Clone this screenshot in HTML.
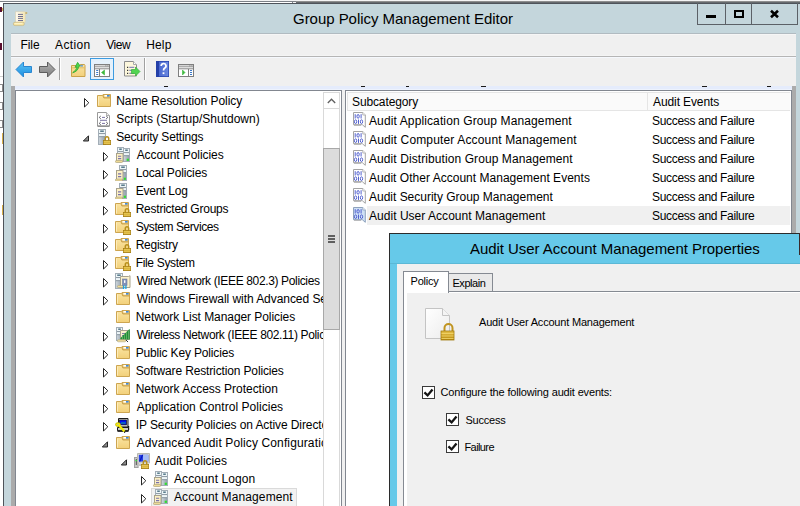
<!DOCTYPE html>
<html><head><meta charset="utf-8"><style>
html,body{margin:0;padding:0;}
body{width:800px;height:506px;overflow:hidden;position:relative;background:#fff;font-family:"Liberation Sans", sans-serif;}
.r{position:absolute;}
.t{position:absolute;white-space:nowrap;}
.clip{position:absolute;overflow:hidden;}
svg.r{overflow:visible;}
</style></head><body>
<svg width="0" height="0" style="position:absolute"><defs><linearGradient id="gFold" x1="0" y1="0" x2="0" y2="1"><stop offset="0" stop-color="#fae3a0"/><stop offset="1" stop-color="#f2d07a"/></linearGradient><linearGradient id="gSrv" x1="0" y1="0" x2="1" y2="0"><stop offset="0" stop-color="#d0d8de"/><stop offset="1" stop-color="#8f9ca8"/></linearGradient><linearGradient id="gLock" x1="0" y1="0" x2="0" y2="1"><stop offset="0" stop-color="#e8c24a"/><stop offset="1" stop-color="#b8890e"/></linearGradient><symbol id="folder" viewBox="0 0 16 16"><path d="M7 1.5 H14.5 V5 H8 Z" fill="#f0d07c" stroke="#cda550"/><rect x="8.5" y="2" width="2.5" height="1.6" fill="#ffffff"/><rect x="11" y="2" width="2.6" height="1.6" fill="#3d8ae2"/><path d="M1.5 2.5 H6.8 L7.8 5 H14.5 V13.5 H1.5 Z" fill="url(#gFold)" stroke="#cda550"/><path d="M2.5 3.5 V12.5" stroke="#fff0c4" stroke-width="0.8"/></symbol><symbol id="folderlock" viewBox="0 0 16 16"><path d="M6 1.5 H13.5 V5 H7 Z" fill="#f0d07c" stroke="#cda550"/><rect x="7.5" y="2" width="2.5" height="1.6" fill="#ffffff"/><rect x="10" y="2" width="2.6" height="1.6" fill="#3d8ae2"/><path d="M0.5 2.5 H5.8 L6.8 5 H13.5 V13.5 H0.5 Z" fill="url(#gFold)" stroke="#cda550"/><path d="M1.5 3.5 V12.5" stroke="#fff0c4" stroke-width="0.8"/><path d="M10.3 11.5 V9.6 a1.7 1.9 0 0 1 3.4 0 V11.5" fill="none" stroke="#b8901c" stroke-width="1.5"/><rect x="8.35" y="11.35" width="7.3" height="4.3" fill="url(#gLock)" stroke="#a27a0c" stroke-width="0.7"/><path d="M8.8 12.9 h6.4 M8.8 14.4 h6.4" stroke="#f6dc6e" stroke-width="0.7"/></symbol><symbol id="scripts" viewBox="0 0 16 16"><path d="M1.5 1.5 h9 l3 3 v10.5 h-12 z" fill="#fff" stroke="#9a9a9a"/><path d="M10.5 1.5 v3 h3" fill="#eee" stroke="#b0b0b0"/><path d="M1.5 15.2 h12" stroke="#777"/><path d="M4.8 5 L3.2 6.4 L4.8 7.8 M10.2 5 L11.8 6.4 L10.2 7.8 M4.8 11 L3.2 12.4 L4.8 13.8 M10.2 11 L11.8 12.4 L10.2 13.8" fill="none" stroke="#55555e" stroke-width="0.9"/><path d="M6 6.4 h3 M4 9.3 h7 M6 12.4 h3" stroke="#7b74a4" stroke-width="1"/></symbol><symbol id="srvlock" viewBox="0 0 16 16"><rect x="2.5" y="0.5" width="7" height="15" fill="url(#gSrv)" stroke="#a3aeb7"/><rect x="3" y="1" width="6" height="3.2" fill="#eef6f8"/><rect x="4.2" y="1.6" width="3.5999999999999996" height="1.1" fill="#1d4a60"/><path d="M3 4.6 h6" stroke="#8c98a2"/><rect x="3" y="5.1" width="6" height="2.2" fill="#eef6f8"/><path d="M3 7.7 h6" stroke="#8c98a2"/><path d="M9.3 11.5 V9.6 a1.7 1.9 0 0 1 3.4 0 V11.5" fill="none" stroke="#b8901c" stroke-width="1.5"/><rect x="7.35" y="11.35" width="7.3" height="4.3" fill="url(#gLock)" stroke="#a27a0c" stroke-width="0.7"/><path d="M7.8 12.9 h6.4 M7.8 14.4 h6.4" stroke="#f6dc6e" stroke-width="0.7"/></symbol><symbol id="srv2" viewBox="0 0 16 16"><rect x="2.5" y="0.5" width="6" height="12" fill="url(#gSrv)" stroke="#a3aeb7"/><rect x="3" y="1" width="5" height="3.2" fill="#eef6f8"/><rect x="4.2" y="1.6" width="2.5999999999999996" height="1.1" fill="#1d4a60"/><path d="M3 4.6 h5" stroke="#8c98a2"/><rect x="3" y="5.1" width="5" height="2.2" fill="#eef6f8"/><path d="M3 7.7 h5" stroke="#8c98a2"/><rect x="8.5" y="1.5" width="6" height="13" fill="url(#gSrv)" stroke="#a3aeb7"/><rect x="9" y="2" width="5" height="3.2" fill="#eef6f8"/><rect x="10.2" y="2.6" width="2.5999999999999996" height="1.1" fill="#1d4a60"/><path d="M9 5.6 h5" stroke="#8c98a2"/><rect x="9" y="6.1" width="5" height="2.2" fill="#eef6f8"/><path d="M9 8.7 h5" stroke="#8c98a2"/><rect x="11.7" y="11.7" width="2.2" height="2.2" fill="#2ee02e"/><rect x="1.5" y="6.5" width="6.5" height="7.8" fill="#fcf0c4" stroke="#a8a28c"/><path d="M3 9.308 h3.2 M3 11.648 h3.2" stroke="#7a72ac" stroke-width="1.1"/><rect x="0.4" y="13.600000000000001" width="7.2" height="1.9" rx="0.9" fill="#f4de98" stroke="#aaa27c" stroke-width="0.7"/></symbol><symbol id="srv1" viewBox="0 0 16 16"><rect x="4.5" y="0.5" width="7" height="15" fill="url(#gSrv)" stroke="#a3aeb7"/><rect x="5" y="1" width="6" height="3.2" fill="#eef6f8"/><rect x="6.2" y="1.6" width="3.5999999999999996" height="1.1" fill="#1d4a60"/><path d="M5 4.6 h6" stroke="#8c98a2"/><rect x="5" y="5.1" width="6" height="2.2" fill="#eef6f8"/><path d="M5 7.7 h6" stroke="#8c98a2"/><rect x="8.7" y="12.7" width="2.2" height="2.2" fill="#2ee02e"/><rect x="1.5" y="5.5" width="6.5" height="9.3" fill="#fcf0c4" stroke="#a8a28c"/><path d="M3 8.848 h3.2 M3 11.638000000000002 h3.2" stroke="#7a72ac" stroke-width="1.1"/><rect x="0.4" y="14.100000000000001" width="7.2" height="1.9" rx="0.9" fill="#f4de98" stroke="#aaa27c" stroke-width="0.7"/></symbol><symbol id="wired" viewBox="0 0 16 16"><rect x="0.5" y="0.5" width="7" height="15" fill="url(#gSrv)" stroke="#a3aeb7"/><rect x="1" y="1" width="6" height="3.2" fill="#eef6f8"/><rect x="2.2" y="1.6" width="3.5999999999999996" height="1.1" fill="#1d4a60"/><path d="M1 4.6 h6" stroke="#8c98a2"/><rect x="1" y="5.1" width="6" height="2.2" fill="#eef6f8"/><path d="M1 7.7 h6" stroke="#8c98a2"/><path d="M5.5 3.5 h8 l1.5 -0.8 v11.8 h-9.5 z" fill="#fcf2cc" stroke="#a8a28c"/><rect x="2.4" y="12.5" width="6" height="2" rx="1" fill="#f4de98" stroke="#aaa27c" stroke-width="0.6"/><rect x="7.5" y="6" width="4.5" height="6.5" fill="#8291b8" stroke="#6d7aa0" stroke-width="0.6"/><rect x="9" y="7.3" width="1.4" height="2.6" fill="#fff"/><path d="M8.6 12.5 v3.5 M10.9 12.5 v3.5" stroke="#1aa2e2" stroke-width="1.3"/></symbol><symbol id="wireless" viewBox="0 0 16 16"><rect x="1.5" y="0.5" width="6" height="13" fill="url(#gSrv)" stroke="#a3aeb7"/><rect x="2" y="1" width="5" height="3.2" fill="#eef6f8"/><rect x="3.2" y="1.6" width="2.5999999999999996" height="1.1" fill="#1d4a60"/><path d="M2 4.6 h5" stroke="#8c98a2"/><rect x="2" y="5.1" width="5" height="2.2" fill="#eef6f8"/><path d="M2 7.7 h5" stroke="#8c98a2"/><path d="M5.5 3.5 h9 v9 h-9 z" fill="#fcf2cc" stroke="#a8a28c"/><path d="M7 6.5 h3 M7 8.5 h2.5" stroke="#7a72ac" stroke-width="0.9"/><path d="M5.5 12.5 V11 L7 9.5 V12.5 Z M7.3 12.5 V9 L9 7.5 V12.5 Z M9.3 12.5 V7 L11 5.5 V12.5 Z M11.3 12.5 V5 L13 3.5 V12.5 Z M13.3 12.5 V3 L14.8 2 V12.5 Z" fill="#1f8f35"/><rect x="2.3" y="12.8" width="8.5" height="2" rx="1" fill="#f4de98" stroke="#aaa27c" stroke-width="0.6"/><path d="M11 13 L13 15" stroke="#333" stroke-width="1"/></symbol><symbol id="ipsec" viewBox="0 0 16 16"><path d="M3.5 1.5 h9.5 v8.5 h-9.5 z" fill="#cdcdcd" stroke="#1a1a1a"/><rect x="4.5" y="3" width="7" height="4.8" fill="#0010f8" stroke="#000" stroke-width="0.6"/><path d="M6 6 h4.5" stroke="#139a9a" stroke-width="1.2"/><path d="M13.6 9 v4" stroke="#111" stroke-width="1.2"/><path d="M2.5 10.5 h11 v3.2 h-11 z" fill="#c8c8c8" stroke="#1a1a1a"/><path d="M2.5 14.2 h11" stroke="#111" stroke-width="1.2"/><ellipse cx="3" cy="7.6" rx="2.6" ry="2" fill="#f8f000" stroke="#9a9000" stroke-width="0.5"/><ellipse cx="2.9" cy="7.4" rx="0.9" ry="0.5" fill="#a8a8d0"/><path d="M4 8.4 L9.5 14.5" stroke="#f4ec00" stroke-width="2.2"/><path d="M9 15.3 h1.2" stroke="#111"/></symbol><symbol id="auditpol" viewBox="0 0 16 16"><rect x="0.5" y="4.5" width="3.6" height="10" fill="#c8c8c8" stroke="#a0a0a0"/><path d="M2.3 6 v6" stroke="#505050" stroke-width="1"/><rect x="1.3" y="7.1" width="2" height="1.1" fill="#3ee83e"/><path d="M3.5 0.5 h12 v9.5 h-12 z" fill="#dcdcd4" stroke="#b8b8b0"/><rect x="4.8" y="1.8" width="9.5" height="6.8" fill="#2840e8"/><rect x="9" y="1.8" width="5.3" height="6.8" fill="#a6bdf4"/><path d="M5 8.6 L8 1.8 h1.2 L6.4 8.6 z" fill="#0818b8"/><path d="M6 11 v2" stroke="#888"/><path d="M9.3 11.5 V9.6 a1.7 1.9 0 0 1 3.4 0 V11.5" fill="none" stroke="#b8901c" stroke-width="1.5"/><rect x="7.35" y="11.35" width="7.3" height="4.3" fill="url(#gLock)" stroke="#a27a0c" stroke-width="0.7"/><path d="M7.8 12.9 h6.4 M7.8 14.4 h6.4" stroke="#f6dc6e" stroke-width="0.7"/></symbol><symbol id="binary" viewBox="0 0 16 16"><path d="M1.5 0.5 h9.3 l2.5 2.5 v12.3 l-3 -2.6 h-8.8 z" fill="#ffffff" stroke="#a4a4a4"/><path d="M10.8 0.5 v2.5 h2.5" fill="#fff" stroke="#a4a4a4" stroke-width="0.8"/><g fill="none" stroke="#4a5acc" stroke-width="0.95"><path d="M3.2 2.2 v4.3"/><ellipse cx="6.1" cy="4.35" rx="1.15" ry="1.85"/><path d="M9.1 2.2 v4.3"/><ellipse cx="3.6" cy="9.7" rx="1.15" ry="1.85"/><path d="M6.5 7.6 v4.3"/><ellipse cx="9.5" cy="9.7" rx="1.15" ry="1.85"/></g><path d="M2 13.3 h7" stroke="#a8a8a8" stroke-width="0.9"/></symbol><symbol id="binarySel" viewBox="0 0 16 16"><path d="M1.5 0.5 h9.3 l2.5 2.5 v12.3 l-3 -2.6 h-8.8 z" fill="#cfe1f6" stroke="#8ea2bc"/><path d="M10.8 0.5 v2.5 h2.5" fill="#fff" stroke="#8ea2bc" stroke-width="0.8"/><g fill="none" stroke="#4a5acc" stroke-width="0.95"><path d="M3.2 2.2 v4.3"/><ellipse cx="6.1" cy="4.35" rx="1.15" ry="1.85"/><path d="M9.1 2.2 v4.3"/><ellipse cx="3.6" cy="9.7" rx="1.15" ry="1.85"/><path d="M6.5 7.6 v4.3"/><ellipse cx="9.5" cy="9.7" rx="1.15" ry="1.85"/></g><path d="M2 13.3 h7" stroke="#a8a8a8" stroke-width="0.9"/></symbol></defs></svg>
<div class="r" style="left:0px;top:0px;width:800px;height:1px;background:#f4f4f4;"></div>
<div class="r" style="left:0px;top:1px;width:800px;height:1px;background:#7c8086;"></div>
<div class="r" style="left:0px;top:2px;width:292px;height:1px;background:#ffffff;"></div>
<div class="r" style="left:292px;top:2px;width:1px;height:1px;background:#7c8086;"></div>
<div class="r" style="left:293px;top:2px;width:3px;height:1px;background:#f4f4f4;"></div>
<div class="r" style="left:296px;top:1px;width:504px;height:1px;background:#8e8e8e;"></div>
<div class="r" style="left:296px;top:2px;width:504px;height:1px;background:#666a6e;"></div>
<div class="r" style="left:0px;top:7px;width:2px;height:5px;background:#5a0f2e;"></div>
<div class="r" style="left:2px;top:8px;width:1px;height:3px;background:#d9b25a;"></div>
<div class="r" style="left:0px;top:43px;width:2px;height:7px;background:#5a0f2e;"></div>
<div class="r" style="left:0px;top:76px;width:3px;height:1px;background:#cfcfcf;"></div>
<div class="r" style="left:0px;top:84px;width:3px;height:8px;background:transparent;border:1px solid #8a8a8a;border-left:none;box-sizing:border-box;"></div>
<div class="r" style="left:0px;top:102px;width:3px;height:8px;background:transparent;border:1px solid #8a8a8a;border-left:none;box-sizing:border-box;"></div>
<div class="r" style="left:0px;top:120px;width:3px;height:8px;background:transparent;border:1px solid #8a8a8a;border-left:none;box-sizing:border-box;"></div>
<div class="r" style="left:2px;top:133px;width:1px;height:11px;background:#d8b04a;"></div>
<div class="r" style="left:2px;top:205px;width:1px;height:10px;background:#d8b04a;"></div>
<div class="r" style="left:3px;top:3px;width:797px;height:503px;background:#c4d6dc;border-left:1px solid #4e535a;border-top:1px solid #4e535a;box-sizing:border-box;"></div>
<svg class="r" style="left:13px;top:11px" width="16" height="16" viewBox="0 0 16 16"><defs><linearGradient id="gScr" x1="0" y1="0" x2="1" y2="0"><stop offset="0" stop-color="#fffaf0"/><stop offset="1" stop-color="#f6e7b0"/></linearGradient></defs><rect x="2.6" y="0.8" width="9.6" height="10.6" fill="url(#gScr)" stroke="#d9d2b4" stroke-width="0.6"/><circle cx="13.3" cy="2" r="1.1" fill="#c9b06a"/><path d="M5 3.4 h5 M5 5.5 h5 M5 7.4 h5 M5 9.5 h5" stroke="#6f6f92" stroke-width="1"/><rect x="0.3" y="11.2" width="11" height="3.4" rx="1.7" fill="#f8e4a0" stroke="#c2b07a" stroke-width="0.6"/><path d="M1.5 12.6 h8" stroke="#fff6d4" stroke-width="0.8"/></svg>
<div class="t" style="left:293px;top:11px;font-size:15px;line-height:15px;color:#000;letter-spacing:-0.034px;">Group Policy Management Editor</div>
<div class="r" style="left:697px;top:3px;width:101px;height:22px;background:transparent;border:1px solid #5c6167;border-top:none;box-sizing:border-box;"></div>
<div class="r" style="left:725px;top:3px;width:1px;height:22px;background:#5c6167;"></div>
<div class="r" style="left:751px;top:3px;width:1px;height:22px;background:#5c6167;"></div>
<div class="r" style="left:706px;top:15px;width:10px;height:3px;background:#000;"></div>
<div class="r" style="left:734px;top:10px;width:10px;height:8px;background:transparent;border:2px solid #000;box-sizing:border-box;"></div>
<svg class="r" style="left:770px;top:10px" width="9" height="8" viewBox="0 0 9 8"><path d="M1 0.8 L8 7.2 M8 0.8 L1 7.2" stroke="#000" stroke-width="2.6"/></svg>
<div class="r" style="left:11px;top:33px;width:785px;height:473px;background:#f0f0f0;"></div>
<div class="r" style="left:11px;top:33px;width:785px;height:1px;background:#b1bbc1;"></div>
<div class="r" style="left:11px;top:34px;width:785px;height:1px;background:#f6f6f6;"></div>
<div class="r" style="left:11px;top:55px;width:785px;height:1px;background:#f4f4f4;"></div>
<div class="r" style="left:11px;top:56px;width:785px;height:1px;background:#b5b5b5;"></div>
<div class="r" style="left:11px;top:57px;width:785px;height:1px;background:#f5f8fd;"></div>
<div class="t" style="left:20.4px;top:39px;font-size:12px;line-height:12px;color:#000;letter-spacing:-0.033px;">File</div>
<div class="t" style="left:55.1px;top:39px;font-size:12px;line-height:12px;color:#000;letter-spacing:0.34px;">Action</div>
<div class="t" style="left:106.2px;top:39px;font-size:12px;line-height:12px;color:#000;letter-spacing:-0.433px;">View</div>
<div class="t" style="left:146.2px;top:39px;font-size:12px;line-height:12px;color:#000;letter-spacing:0.167px;">Help</div>
<svg class="r" style="left:15px;top:61px" width="18" height="17" viewBox="0 0 18 17"><defs><linearGradient id="gBA" x1="0" y1="0" x2="0" y2="1"><stop offset="0" stop-color="#5cc4f5"/><stop offset="1" stop-color="#1a8de0"/></linearGradient></defs><path d="M1 8.5 L8.5 1 V5.5 H16.5 V11.5 H8.5 V16 Z" fill="url(#gBA)" stroke="#2a86d0" stroke-width="1"/></svg>
<svg class="r" style="left:38px;top:61px" width="18" height="17" viewBox="0 0 18 17"><defs><linearGradient id="gFA" x1="0" y1="0" x2="0" y2="1"><stop offset="0" stop-color="#b4b4b4"/><stop offset="1" stop-color="#7c7c7c"/></linearGradient></defs><path d="M17 8.5 L9.5 1 V5.5 H1.5 V11.5 H9.5 V16 Z" fill="url(#gFA)" stroke="#5d5d5d" stroke-width="1"/></svg>
<div class="r" style="left:59px;top:58px;width:1px;height:22px;background:#a0a0a0;"></div>
<div class="r" style="left:60px;top:58px;width:1px;height:22px;background:#ffffff;"></div>
<svg class="r" style="left:70px;top:61px" width="16" height="17" viewBox="0 0 16 17"><path d="M1.5 4.5 h8 l0.8 -1 h4.2 l0.5 1 v11 h-13.5 z" fill="url(#gFold)" stroke="#c9a24a"/><path d="M2 6.8 h12.5" stroke="#e2bd62"/><rect x="10.3" y="4.2" width="2.6" height="1.3" fill="#4a8fe0"/><path d="M2.6 11.8 C4.5 10 6.5 8.5 7 6 L5 6.3 L7.6 1.3 L10.2 5 L8.6 5.5 C8.6 8.5 6 11 2.6 11.8 Z" fill="#4cd44c" stroke="#2aa52a" stroke-width="0.7"/></svg>
<div class="r" style="left:90px;top:58px;width:24px;height:22px;background:#e5f1fb;border:1px solid #3c9be0;box-sizing:border-box;"></div>
<svg class="r" style="left:94px;top:64px" width="16" height="13" viewBox="0 0 16 13"><rect x="0.5" y="0.5" width="15" height="12" fill="#fff" stroke="#7f7f7f"/><rect x="1" y="1" width="14" height="1.6" fill="#d6d6d6"/><path d="M11.5 1.8 h0.8 M13.5 1.8 h0.8" stroke="#7f7f7f" stroke-width="1.2"/><path d="M1 2.9 h14" stroke="#8a8a8a"/><rect x="1" y="3.3" width="14" height="1.2" fill="#e4e4e4"/><path d="M1 4.8 h14" stroke="#8a8a8a"/><path d="M5.5 5 v7.5" stroke="#7f7f7f"/><path d="M2.2 6.5 h2 M2.2 8.5 h2 M2.2 10.5 h2" stroke="#3a78c8" stroke-width="1.1"/><path d="M10.5 6 L7.5 8.5 L10.5 11 Z" fill="#3cb83c" stroke="#3cb83c" stroke-width="0.6"/></svg>
<svg class="r" style="left:123px;top:60px" width="18" height="17" viewBox="0 0 18 17"><path d="M1.5 1.5 h9 l3 3 v11.5 h-12 z" fill="#fdf7dc" stroke="#8c8c8c"/><path d="M10.5 1.5 v3 h3" fill="#fff" stroke="#a8a8a8"/><path d="M4 7.3 h1.2 M4 10.3 h1.2 M4 13.3 h1.2" stroke="#333" stroke-width="1.2"/><path d="M6.3 7.3 h5 M6.3 10.3 h5 M6.3 13.3 h5" stroke="#7070b0" stroke-width="1"/><path d="M8.5 9.5 h4 v-2.5 l4.5 4.5 -4.5 4.5 v-2.5 h-4 z" fill="#52d452" stroke="#38b038" stroke-width="0.7"/></svg>
<div class="r" style="left:144px;top:58px;width:1px;height:22px;background:#a0a0a0;"></div>
<div class="r" style="left:145px;top:58px;width:1px;height:22px;background:#ffffff;"></div>
<svg class="r" style="left:156px;top:61px" width="13" height="16" viewBox="0 0 13 16"><defs><linearGradient id="gHelp" x1="0" y1="0" x2="1" y2="0"><stop offset="0" stop-color="#4a68d0"/><stop offset="1" stop-color="#6a88e0"/></linearGradient></defs><rect x="0" y="0" width="13" height="16" fill="#2440a8"/><rect x="3" y="0.7" width="9.3" height="14.6" fill="url(#gHelp)"/><path d="M5.2 5 a2.4 2.4 0 1 1 3.6 2 c-1 0.6 -1.3 1.1 -1.3 2.6" fill="none" stroke="#fff" stroke-width="1.7"/><rect x="6.6" y="11.3" width="1.8" height="1.8" fill="#fff"/></svg>
<svg class="r" style="left:178px;top:64px" width="16" height="13" viewBox="0 0 16 13"><rect x="0.5" y="0.5" width="15" height="12" fill="#fff" stroke="#7f7f7f"/><rect x="1" y="1" width="14" height="1.6" fill="#d6d6d6"/><path d="M11.5 1.8 h0.8 M13.5 1.8 h0.8" stroke="#7f7f7f" stroke-width="1.2"/><path d="M1 2.9 h14" stroke="#8a8a8a"/><rect x="1" y="3.3" width="14" height="1.2" fill="#e4e4e4"/><path d="M1 4.8 h14" stroke="#8a8a8a"/><path d="M10.5 5 v7.5" stroke="#7f7f7f"/><path d="M12 6.5 h2 M12 8.5 h2 M12 10.5 h2" stroke="#3a78c8" stroke-width="1.1"/><path d="M4.5 6 L7 8.5 L4.5 11 Z" fill="#3cb83c" stroke="#3cb83c" stroke-width="0.6"/></svg>
<div class="r" style="left:15px;top:86px;width:777px;height:3px;background:#e5ecfc;"></div>
<div class="r" style="left:15px;top:89px;width:777px;height:1px;background:#eef3fd;"></div>
<div class="r" style="left:164px;top:86px;width:4px;height:1px;background:#1a1a1a;"></div>
<div class="r" style="left:361px;top:86px;width:4px;height:1px;background:#1a1a1a;"></div>
<div class="r" style="left:406px;top:86px;width:3px;height:1px;background:#1a1a1a;"></div>
<div class="r" style="left:481px;top:86px;width:5px;height:1px;background:#1a1a1a;"></div>
<div class="r" style="left:702px;top:86px;width:5px;height:1px;background:#1a1a1a;"></div>
<div class="r" style="left:767px;top:86px;width:4px;height:1px;background:#1a1a1a;"></div>
<div class="r" style="left:11px;top:86px;width:4px;height:420px;background:#ababab;"></div>
<div class="r" style="left:792px;top:86px;width:4px;height:420px;background:#ababab;"></div>
<div class="r" style="left:15px;top:90px;width:327px;height:416px;background:#ffffff;border-left:1px solid #828790;border-top:1px solid #828790;border-right:1px solid #828790;box-sizing:border-box;"></div>
<div class="r" style="left:345px;top:90px;width:447px;height:416px;background:#ffffff;border-left:1px solid #828790;border-top:1px solid #828790;border-right:1px solid #828790;box-sizing:border-box;"></div>
<div class="clip" style="left:16px;top:91px;width:307px;height:415px">
<div class="r" style="left:-16px;top:-91px;width:800px;height:506px">
<svg class="r" style="left:83px;top:98px" width="7" height="10" viewBox="0 0 7 10"><path d="M1.5 0.5 L1.5 9 L5.8 4.75 Z" fill="#fff" stroke="#262626" stroke-width="1"/></svg>
<svg class="r" style="left:96px;top:93px" width="16" height="16"><use href="#folder"/></svg>
<div class="t" style="left:116.2px;top:95px;font-size:12px;line-height:12px;color:#000;letter-spacing:-0.067px;">Name Resolution Policy</div>
<svg class="r" style="left:96px;top:111px" width="16" height="16"><use href="#scripts"/></svg>
<div class="t" style="left:116.2px;top:113px;font-size:12px;line-height:12px;color:#000;letter-spacing:0.004px;">Scripts (Startup/Shutdown)</div>
<svg class="r" style="left:82px;top:135px" width="8" height="8" viewBox="0 0 8 8"><path d="M1.3 6 L6.5 0.8 L6.5 6 Z" fill="#8c8c8c" stroke="#262626" stroke-width="1"/></svg>
<svg class="r" style="left:96px;top:129px" width="16" height="16"><use href="#srvlock"/></svg>
<div class="t" style="left:116.2px;top:131px;font-size:12px;line-height:12px;color:#000;letter-spacing:-0.169px;">Security Settings</div>
<svg class="r" style="left:102px;top:152px" width="7" height="10" viewBox="0 0 7 10"><path d="M1.5 0.5 L1.5 9 L5.8 4.75 Z" fill="#fff" stroke="#262626" stroke-width="1"/></svg>
<svg class="r" style="left:115px;top:147px" width="16" height="16"><use href="#srv2"/></svg>
<div class="t" style="left:136.7px;top:149px;font-size:12px;line-height:12px;color:#000;letter-spacing:-0.073px;">Account Policies</div>
<svg class="r" style="left:102px;top:170px" width="7" height="10" viewBox="0 0 7 10"><path d="M1.5 0.5 L1.5 9 L5.8 4.75 Z" fill="#fff" stroke="#262626" stroke-width="1"/></svg>
<svg class="r" style="left:115px;top:165px" width="16" height="16"><use href="#srv1"/></svg>
<div class="t" style="left:135.7px;top:167px;font-size:12px;line-height:12px;color:#000;letter-spacing:-0.146px;">Local Policies</div>
<svg class="r" style="left:102px;top:188px" width="7" height="10" viewBox="0 0 7 10"><path d="M1.5 0.5 L1.5 9 L5.8 4.75 Z" fill="#fff" stroke="#262626" stroke-width="1"/></svg>
<svg class="r" style="left:115px;top:183px" width="16" height="16"><use href="#srv1"/></svg>
<div class="t" style="left:135.7px;top:185px;font-size:12px;line-height:12px;color:#000;letter-spacing:-0.237px;">Event Log</div>
<svg class="r" style="left:102px;top:206px" width="7" height="10" viewBox="0 0 7 10"><path d="M1.5 0.5 L1.5 9 L5.8 4.75 Z" fill="#fff" stroke="#262626" stroke-width="1"/></svg>
<svg class="r" style="left:115px;top:201px" width="16" height="16"><use href="#folderlock"/></svg>
<div class="t" style="left:135.7px;top:203px;font-size:12px;line-height:12px;color:#000;letter-spacing:-0.244px;">Restricted Groups</div>
<svg class="r" style="left:102px;top:224px" width="7" height="10" viewBox="0 0 7 10"><path d="M1.5 0.5 L1.5 9 L5.8 4.75 Z" fill="#fff" stroke="#262626" stroke-width="1"/></svg>
<svg class="r" style="left:115px;top:219px" width="16" height="16"><use href="#folderlock"/></svg>
<div class="t" style="left:135.7px;top:221px;font-size:12px;line-height:12px;color:#000;letter-spacing:-0.436px;">System Services</div>
<svg class="r" style="left:102px;top:242px" width="7" height="10" viewBox="0 0 7 10"><path d="M1.5 0.5 L1.5 9 L5.8 4.75 Z" fill="#fff" stroke="#262626" stroke-width="1"/></svg>
<svg class="r" style="left:115px;top:237px" width="16" height="16"><use href="#folderlock"/></svg>
<div class="t" style="left:135.7px;top:239px;font-size:12px;line-height:12px;color:#000;letter-spacing:-0.257px;">Registry</div>
<svg class="r" style="left:102px;top:260px" width="7" height="10" viewBox="0 0 7 10"><path d="M1.5 0.5 L1.5 9 L5.8 4.75 Z" fill="#fff" stroke="#262626" stroke-width="1"/></svg>
<svg class="r" style="left:115px;top:255px" width="16" height="16"><use href="#folderlock"/></svg>
<div class="t" style="left:135.7px;top:257px;font-size:12px;line-height:12px;color:#000;letter-spacing:-0.33px;">File System</div>
<svg class="r" style="left:102px;top:278px" width="7" height="10" viewBox="0 0 7 10"><path d="M1.5 0.5 L1.5 9 L5.8 4.75 Z" fill="#fff" stroke="#262626" stroke-width="1"/></svg>
<svg class="r" style="left:115px;top:273px" width="16" height="16"><use href="#wired"/></svg>
<div class="t" style="left:136.7px;top:275px;font-size:12px;line-height:12px;color:#000;letter-spacing:-0.356px;">Wired Network (IEEE 802.3) Policies</div>
<svg class="r" style="left:102px;top:296px" width="7" height="10" viewBox="0 0 7 10"><path d="M1.5 0.5 L1.5 9 L5.8 4.75 Z" fill="#fff" stroke="#262626" stroke-width="1"/></svg>
<svg class="r" style="left:115px;top:291px" width="16" height="16"><use href="#folder"/></svg>
<div class="t" style="left:136.7px;top:293px;font-size:12px;line-height:12px;color:#000;letter-spacing:-0.055px;">Windows Firewall with Advanced Security</div>
<svg class="r" style="left:115px;top:309px" width="16" height="16"><use href="#folder"/></svg>
<div class="t" style="left:135.7px;top:311px;font-size:12px;line-height:12px;color:#000;letter-spacing:-0.068px;">Network List Manager Policies</div>
<svg class="r" style="left:102px;top:332px" width="7" height="10" viewBox="0 0 7 10"><path d="M1.5 0.5 L1.5 9 L5.8 4.75 Z" fill="#fff" stroke="#262626" stroke-width="1"/></svg>
<svg class="r" style="left:115px;top:327px" width="16" height="16"><use href="#wireless"/></svg>
<div class="t" style="left:136.7px;top:329px;font-size:12px;line-height:12px;color:#000;letter-spacing:-0.344px;">Wireless Network (IEEE 802.11) Policies</div>
<svg class="r" style="left:102px;top:350px" width="7" height="10" viewBox="0 0 7 10"><path d="M1.5 0.5 L1.5 9 L5.8 4.75 Z" fill="#fff" stroke="#262626" stroke-width="1"/></svg>
<svg class="r" style="left:115px;top:345px" width="16" height="16"><use href="#folder"/></svg>
<div class="t" style="left:135.7px;top:347px;font-size:12px;line-height:12px;color:#000;letter-spacing:-0.161px;">Public Key Policies</div>
<svg class="r" style="left:102px;top:368px" width="7" height="10" viewBox="0 0 7 10"><path d="M1.5 0.5 L1.5 9 L5.8 4.75 Z" fill="#fff" stroke="#262626" stroke-width="1"/></svg>
<svg class="r" style="left:115px;top:363px" width="16" height="16"><use href="#folder"/></svg>
<div class="t" style="left:135.7px;top:365px;font-size:12px;line-height:12px;color:#000;letter-spacing:-0.139px;">Software Restriction Policies</div>
<svg class="r" style="left:102px;top:386px" width="7" height="10" viewBox="0 0 7 10"><path d="M1.5 0.5 L1.5 9 L5.8 4.75 Z" fill="#fff" stroke="#262626" stroke-width="1"/></svg>
<svg class="r" style="left:115px;top:381px" width="16" height="16"><use href="#folder"/></svg>
<div class="t" style="left:135.7px;top:383px;font-size:12px;line-height:12px;color:#000;letter-spacing:-0.021px;">Network Access Protection</div>
<svg class="r" style="left:102px;top:404px" width="7" height="10" viewBox="0 0 7 10"><path d="M1.5 0.5 L1.5 9 L5.8 4.75 Z" fill="#fff" stroke="#262626" stroke-width="1"/></svg>
<svg class="r" style="left:115px;top:399px" width="16" height="16"><use href="#folder"/></svg>
<div class="t" style="left:136.7px;top:401px;font-size:12px;line-height:12px;color:#000;letter-spacing:0.037px;">Application Control Policies</div>
<svg class="r" style="left:102px;top:422px" width="7" height="10" viewBox="0 0 7 10"><path d="M1.5 0.5 L1.5 9 L5.8 4.75 Z" fill="#fff" stroke="#262626" stroke-width="1"/></svg>
<svg class="r" style="left:115px;top:417px" width="16" height="16"><use href="#ipsec"/></svg>
<div class="t" style="left:135.7px;top:419px;font-size:12px;line-height:12px;color:#000;letter-spacing:-0.089px;">IP Security Policies on Active Directory (example.local)</div>
<svg class="r" style="left:101px;top:441px" width="8" height="8" viewBox="0 0 8 8"><path d="M1.3 6 L6.5 0.8 L6.5 6 Z" fill="#8c8c8c" stroke="#262626" stroke-width="1"/></svg>
<svg class="r" style="left:115px;top:435px" width="16" height="16"><use href="#folder"/></svg>
<div class="t" style="left:136.7px;top:437px;font-size:12px;line-height:12px;color:#000;letter-spacing:0.125px;">Advanced Audit Policy Configuration</div>
<svg class="r" style="left:120px;top:459px" width="8" height="8" viewBox="0 0 8 8"><path d="M1.3 6 L6.5 0.8 L6.5 6 Z" fill="#8c8c8c" stroke="#262626" stroke-width="1"/></svg>
<svg class="r" style="left:134px;top:453px" width="16" height="16"><use href="#auditpol"/></svg>
<div class="t" style="left:154.8px;top:455px;font-size:12px;line-height:12px;color:#000;letter-spacing:0.008px;">Audit Policies</div>
<svg class="r" style="left:140px;top:476px" width="7" height="10" viewBox="0 0 7 10"><path d="M1.5 0.5 L1.5 9 L5.8 4.75 Z" fill="#fff" stroke="#262626" stroke-width="1"/></svg>
<svg class="r" style="left:153px;top:471px" width="16" height="16"><use href="#srv2"/></svg>
<div class="t" style="left:174px;top:473px;font-size:12px;line-height:12px;color:#000;letter-spacing:0.1px;">Account Logon</div>
<div class="r" style="left:151px;top:488px;width:146px;height:19px;background:#f2f2f2;border:1px solid #dadada;box-sizing:border-box;"></div>
<svg class="r" style="left:140px;top:494px" width="7" height="10" viewBox="0 0 7 10"><path d="M1.5 0.5 L1.5 9 L5.8 4.75 Z" fill="#fff" stroke="#262626" stroke-width="1"/></svg>
<svg class="r" style="left:153px;top:489px" width="16" height="16"><use href="#srv2"/></svg>
<div class="t" style="left:174px;top:491px;font-size:12px;line-height:12px;color:#000;letter-spacing:0.112px;">Account Management</div>
</div></div>
<div class="r" style="left:323px;top:92px;width:17px;height:414px;background:#ffffff;border-left:1px solid #d9d9d9;border-right:1px solid #d9d9d9;box-sizing:border-box;"></div>
<div class="r" style="left:323px;top:92px;width:17px;height:17px;background:#ffffff;border:1px solid #d9d9d9;box-sizing:border-box;"></div>
<svg class="r" style="left:327px;top:98px" width="9" height="6" viewBox="0 0 9 6"><path d="M0.8 5 L4.5 1.2 L8.2 5" fill="none" stroke="#606060" stroke-width="1.3"/></svg>
<div class="r" style="left:323px;top:148px;width:17px;height:182px;background:#dcdcdc;border:1px solid #a8a8a8;box-sizing:border-box;"></div>
<div class="r" style="left:328px;top:235px;width:7px;height:2px;background:#5f5f5f;"></div>
<div class="r" style="left:328px;top:238px;width:7px;height:2px;background:#5f5f5f;"></div>
<div class="r" style="left:328px;top:241px;width:7px;height:2px;background:#5f5f5f;"></div>
<div class="r" style="left:346px;top:91px;width:445px;height:1px;background:#ffffff;"></div>
<div class="r" style="left:347px;top:92px;width:443px;height:19px;background:#fafafa;border-top:1px solid #e5e5e5;border-left:1px solid #e5e5e5;border-bottom:1px solid #e5e5e5;box-sizing:border-box;"></div>
<div class="r" style="left:647px;top:93px;width:1px;height:17px;background:#e5e5e5;"></div>
<div class="t" style="left:352px;top:96px;font-size:12px;line-height:12px;color:#000;letter-spacing:-0.12px;">Subcategory</div>
<div class="t" style="left:653.1px;top:96px;font-size:12px;line-height:12px;color:#000;letter-spacing:-0.118px;">Audit Events</div>
<svg class="r" style="left:352px;top:112px" width="16" height="16"><use href="#binary"/></svg>
<div class="t" style="left:369px;top:115px;font-size:12px;line-height:12px;color:#000;letter-spacing:0.118px;">Audit Application Group Management</div>
<div class="t" style="left:652.1px;top:115px;font-size:12px;line-height:12px;color:#000;letter-spacing:-0.339px;">Success and Failure</div>
<svg class="r" style="left:352px;top:131px" width="16" height="16"><use href="#binary"/></svg>
<div class="t" style="left:369px;top:134px;font-size:12px;line-height:12px;color:#000;letter-spacing:0.15px;">Audit Computer Account Management</div>
<div class="t" style="left:652.1px;top:134px;font-size:12px;line-height:12px;color:#000;letter-spacing:-0.339px;">Success and Failure</div>
<svg class="r" style="left:352px;top:150px" width="16" height="16"><use href="#binary"/></svg>
<div class="t" style="left:369px;top:153px;font-size:12px;line-height:12px;color:#000;letter-spacing:0.085px;">Audit Distribution Group Management</div>
<div class="t" style="left:652.1px;top:153px;font-size:12px;line-height:12px;color:#000;letter-spacing:-0.339px;">Success and Failure</div>
<svg class="r" style="left:352px;top:169px" width="16" height="16"><use href="#binary"/></svg>
<div class="t" style="left:369px;top:172px;font-size:12px;line-height:12px;color:#000;letter-spacing:0.022px;">Audit Other Account Management Events</div>
<div class="t" style="left:652.1px;top:172px;font-size:12px;line-height:12px;color:#000;letter-spacing:-0.339px;">Success and Failure</div>
<svg class="r" style="left:352px;top:188px" width="16" height="16"><use href="#binary"/></svg>
<div class="t" style="left:369px;top:191px;font-size:12px;line-height:12px;color:#000;letter-spacing:-0.01px;">Audit Security Group Management</div>
<div class="t" style="left:652.1px;top:191px;font-size:12px;line-height:12px;color:#000;letter-spacing:-0.339px;">Success and Failure</div>
<div class="r" style="left:367px;top:206px;width:423px;height:19px;background:#f0f0f0;"></div>
<svg class="r" style="left:352px;top:207px" width="16" height="16"><use href="#binarySel"/></svg>
<div class="t" style="left:369px;top:210px;font-size:12px;line-height:12px;color:#000;letter-spacing:0.032px;">Audit User Account Management</div>
<div class="t" style="left:652.1px;top:210px;font-size:12px;line-height:12px;color:#000;letter-spacing:-0.339px;">Success and Failure</div>
<div class="r" style="left:389px;top:233px;width:411px;height:273px;background:#66c9e9;border-left:1px solid #2b2b2b;border-top:1px solid #2b2b2b;box-sizing:border-box;"></div>
<div class="r" style="left:799px;top:233px;width:1px;height:22px;background:#3a2a2a;"></div>
<div class="r" style="left:390px;top:263px;width:410px;height:1px;background:#5bb8d6;"></div>
<div class="t" style="left:470px;top:241px;font-size:15px;line-height:15px;color:#000;letter-spacing:-0.051px;">Audit User Account Management Properties</div>
<div class="r" style="left:397px;top:264px;width:403px;height:242px;background:#f0f0f0;"></div>
<div class="r" style="left:403px;top:291px;width:397px;height:215px;background:#ffffff;border-left:1px solid #858a92;border-top:1px solid #858a92;box-sizing:border-box;"></div>
<div class="r" style="left:407px;top:293px;width:393px;height:213px;background:#f0f0f0;"></div>
<div class="r" style="left:448px;top:273px;width:45px;height:19px;background:#e9e9e9;border:1px solid #858a92;border-left:none;box-sizing:border-box;"></div>
<div class="r" style="left:403px;top:271px;width:46px;height:22px;background:#ffffff;border:1px solid #858a92;border-bottom:none;box-sizing:border-box;"></div>
<div class="t" style="left:410.5px;top:276px;font-size:11px;line-height:11px;color:#000;letter-spacing:-0.2px;">Policy</div>
<div class="t" style="left:452.5px;top:278px;font-size:11px;line-height:11px;color:#000;letter-spacing:-0.467px;">Explain</div>
<svg class="r" style="left:424px;top:307px" width="32" height="34" viewBox="0 0 32 34"><defs><linearGradient id="gDoc" x1="0" y1="0" x2="1" y2="1"><stop offset="0" stop-color="#ffffff"/><stop offset="1" stop-color="#ececec"/></linearGradient></defs><path d="M1.5 1.5 h17 l7 7 v23 h-24 z" fill="url(#gDoc)" stroke="#c4c4c4"/><path d="M18.5 1.5 v7 h7" fill="#f4f4f4" stroke="#c4c4c4"/><path d="M20.5 24 v-3 a4 4 0 0 1 8 0 v3" fill="none" stroke="#c09420" stroke-width="2"/><rect x="17" y="24" width="13" height="9" fill="url(#gLock)" stroke="#a07a10" stroke-width="0.8"/><path d="M17.5 26.5 h12 M17.5 29 h12 M17.5 31.5 h12" stroke="#f3d870" stroke-width="0.8"/></svg>
<div class="t" style="left:479px;top:317px;font-size:11px;line-height:11px;color:#000;letter-spacing:-0.193px;">Audit User Account Management</div>
<div class="r" style="left:422px;top:386px;width:13px;height:13px;background:#ffffff;border:1px solid #3a3a3a;box-sizing:border-box;"></div>
<svg class="r" style="left:422px;top:386px" width="13" height="13" viewBox="0 0 13 13"><path d="M2.4 6.4 L5.6 9.4 L10.5 3.4" fill="none" stroke="#151515" stroke-width="2.3" stroke-linejoin="miter"/></svg>
<div class="t" style="left:440.5px;top:387px;font-size:11px;line-height:11px;color:#000;letter-spacing:-0.158px;">Configure the following audit events:</div>
<div class="r" style="left:446px;top:413px;width:13px;height:13px;background:#ffffff;border:1px solid #3a3a3a;box-sizing:border-box;"></div>
<svg class="r" style="left:446px;top:413px" width="13" height="13" viewBox="0 0 13 13"><path d="M2.4 6.4 L5.6 9.4 L10.5 3.4" fill="none" stroke="#151515" stroke-width="2.3" stroke-linejoin="miter"/></svg>
<div class="t" style="left:465.5px;top:415px;font-size:11px;line-height:11px;color:#000;letter-spacing:-0.217px;">Success</div>
<div class="r" style="left:446px;top:440px;width:13px;height:13px;background:#ffffff;border:1px solid #3a3a3a;box-sizing:border-box;"></div>
<svg class="r" style="left:446px;top:440px" width="13" height="13" viewBox="0 0 13 13"><path d="M2.4 6.4 L5.6 9.4 L10.5 3.4" fill="none" stroke="#151515" stroke-width="2.3" stroke-linejoin="miter"/></svg>
<div class="t" style="left:464.5px;top:442px;font-size:11px;line-height:11px;color:#000;letter-spacing:-0.6px;">Failure</div>

</body></html>
